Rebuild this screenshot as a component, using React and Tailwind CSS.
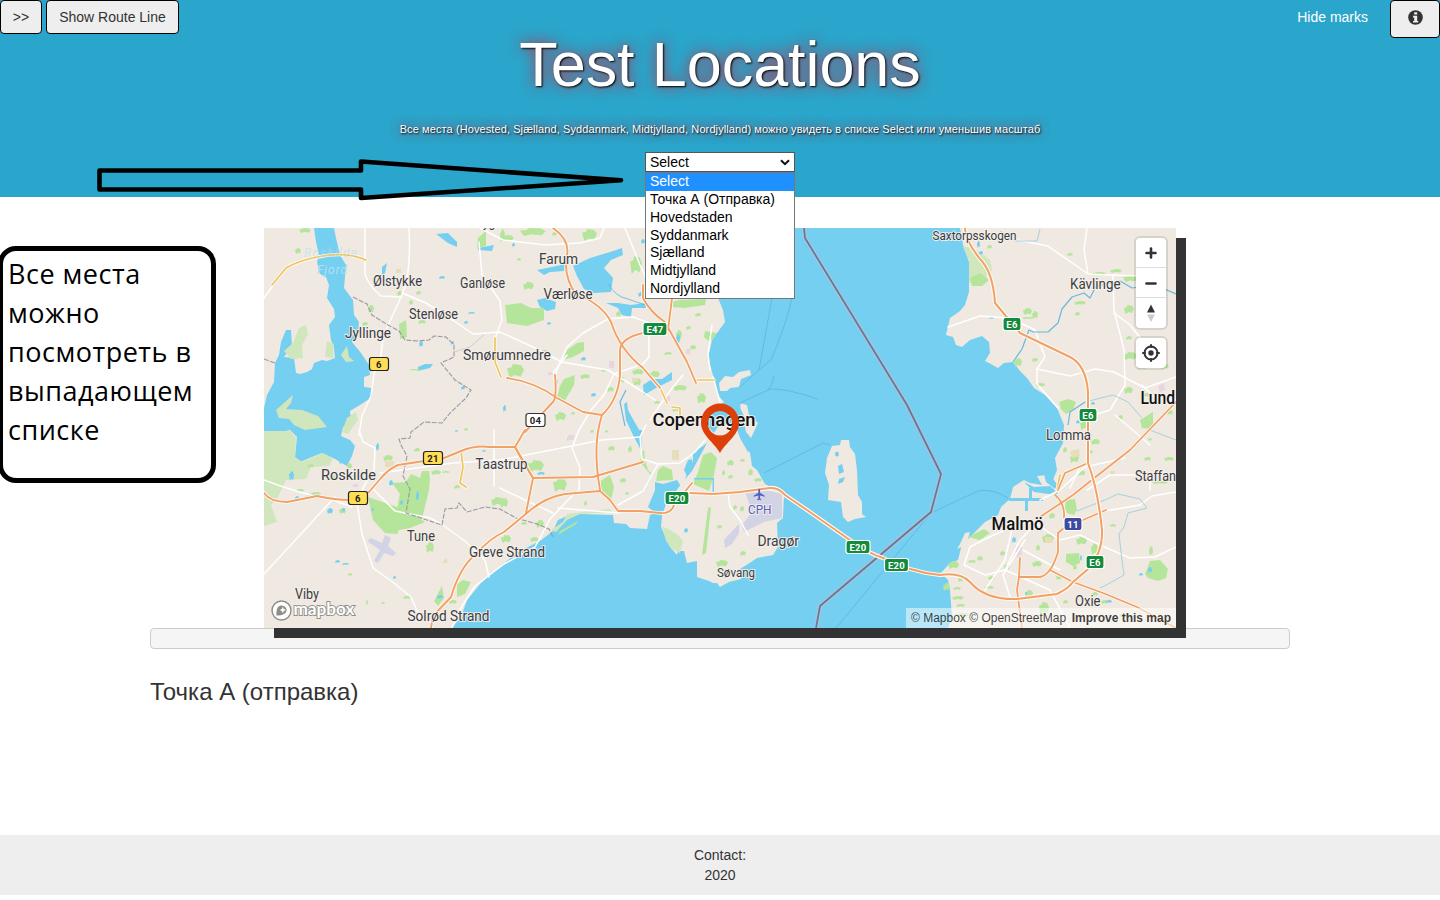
import { MdFlight } from "react-icons/md";

const WATER = "#75cff0";
const LAND = "#efe9e1";
const GREEN = "#b4e59b";

const OPTIONS = ["Select", "Точка А (Отправка)", "Hovedstaden", "Syddanmark", "Sjælland", "Midtjylland", "Nordjylland"];

/* Map geometry uses one shared coordinate space, see the svg viewBox. */
const WATER_PATHS = [
  // Roskilde Fjord
  "M314 228 L316 242 L319 255 L317 262 L320 274 L326 277 L329 285 L327 298 L334 309 L335 317 L329 325 L331 340 L334 348 L335 358 L327 361 L322 360 L314 363 L312 369 L307 372 L300 374 L296 373 L294 358 L284 357 L292 346 L291 330 L286 330 L281 342 L279 355 L275 363 L274 382 L267 395 L264 408 L264 436 L290 430 L297 437 L295 457 L300 462 L312 457 L322 453 L335 459 L347 466 L352 456 L355 446 L350 440 L341 436 L343 427 L351 420 L350 411 L360 405 L372 397 L372 388 L364 387 L364 377 L370 375 L369 365 L361 353 L352 342 L358 333 L359 322 L354 315 L353 300 L344 288 L346 265 L340 255 L336 238 L334 228 Z",
  // Øresund
  "M452 628 L461 617 L467 600 L481 583 L504 563 L520 551 L540 541 L553 531 L558 520 L567 516 L580 514 L613 515 L614 523 L626 524 L630 528 L647 529 L650 515 L655 513 L648 507 L655 490 L655 482 L663 484 L677 480 L682 488 L687 474 L687 464 L693 462 L693 453 L707 443 L714 433 L706 425 L712 410 L724 402 L718 395 L713 375 L708 358 L712 340 L725 322 L723 310 L718 298 L718 228 L960 228 L963 245 L969 262 L969 292 L965 305 L960 311 L950 318 L946 335 L953 337 L956 345 L962 347 L970 340 L982 336 L989 342 L990 353 L985 361 L989 363 L998 368 L1004 363 L1013 362 L1020 371 L1027 378 L1034 388 L1045 395 L1057 408 L1064 425 L1063 443 L1055 458 L1057 470 L1052 482 L1047 475 L1037 476 L1042 485 L1030 483 L1024 480 L1013 487 L1010 499 L1001 507 L998 515 L985 522 L970 537 L962 544 L958 560 L950 563 L941 573 L948 580 L950 590 L952 617 L948 628 Z",
  // lakes around Farum and Copenhagen
  "M573 266 L590 258 L610 252 L622 248 L623 255 L611 260 L604 268 L613 278 L611 292 L594 293 L584 289 L577 276 Z",
  "M537 270 L552 267 L566 264 L564 271 L550 272 L544 275 Z",
  "M537 300 L545 298 L556 302 L555 309 L547 311 L540 307 Z",
  "M606 303 L618 303 L631 305 L645 303 L646 308 L632 308 L631 317 L622 315 L618 308 Z",
  "M643 385 L652 379 L662 379 L672 372 L672 380 L656 388 L644 395 Z",
  "M436 234 L448 233 L457 242 L457 247 L448 243 Z",
  "M418 367 L425 364 L433 364 L430 368 L418 371 Z",
  "M478 248 L494 245 L492 251 L478 250 Z",
  "M382 267 L387 263 L385 273 L382 276 Z",
  "M624 404 L627 402 L628 410 L634 421 L641 433 L642 452 L633 435 L626 420 Z",
  "M632 430 L642 430 L642 435 L634 436 Z",
];

const ISLANDS = [
  "M832 446 L840 445 L841 440 L849 440 L850 447 L855 454 L857 470 L858 495 L862 502 L862 514 L866 517 L855 519 L848 522 L843 517 L841 502 L828 500 L829 485 L825 473 L827 458 Z",
  "M719 383 L725 376 L733 377 L739 372 L750 370 L751 375 L741 379 L739 387 L730 388 L727 391 L720 391 Z",
  // Amager
  "M720 424 L708 441 L700 456 L692 471 L681 484 L674 494 L667 501 L662 516 L661 527 L670 547 L677 555 L678 551 L684 551 L687 563 L697 561 L697 577 L709 581 L713 583 L717 583 L720 587 L729 582 L741 579 L740 569 L748 564 L757 558 L773 555 L778 547 L777 523 L783 518 L784 495 L780 492 L765 484 L757 470 L752 466 L750 453 L743 440 L736 425 Z",
  "M739 403 L747 405 L749 415 L758 423 L751 438 L746 432 L742 414 Z",
  "M960 544 L965 533 L970 532 L966 545 L957 549 Z",
];

const PALE_PARKS = [
  "M299 328 L306 325 L308 334 L302 345 L303 358 L291 359 L284 351 L293 343 Z",
  "M327 341 L334 344 L333 358 L325 357 Z",
  "M341 355 L347 346 L349 357 L354 361 L346 362 Z",
  "M276 410 L293 395 L291 403 L286 409 L302 410 L318 416 L327 427 L305 430 L294 425 L289 419 L279 418 Z",
  "M347 418 L356 412 L358 420 L348 434 L342 432 Z",
  "M264 431 L290 431 L296 438 L295 457 L302 462 L314 457 L322 453 L333 458 L329 466 L311 467 L306 479 L286 480 L278 497 L271 505 L277 522 L264 526 Z",
  "M662 526 L677 534 L683 541 L680 553 L672 549 L666 541 Z",
  "M963 247 L972 247 L990 260 L992 270 L982 282 L969 283 L969 260 Z",
  "M551 530 L563 522 L567 514 L610 509 L612 512 L580 514 L567 520 L556 532 Z",
];

const PARKS = [
  "M368 497 L394 506 L413 513 L425 522 L410 528 L399 530 L397 534 L385 533 L373 520 Z",
  "M392 483 L406 482 L411 474 L420 478 L422 471 L429 471 L430 479 L429 490 L422 519 L408 513 L397 509 L400 494 Z",
  "M505 305 L521 303 L531 308 L544 308 L544 320 L527 326 L507 323 Z",
  "M564 379 L575 375 L574 385 L564 402 L557 397 L560 386 Z",
  "M703 455 L711 452 L717 458 L714 475 L709 491 L693 484 L698 472 Z",
  "M658 470 L663 466 L672 470 L673 480 L656 481 Z",
  "M599 482 L610 475 L614 487 L611 500 L602 493 Z",
  "M671 302 L680 300 L706 299 L705 305 L685 308 L672 307 Z",
  "M705 331 L717 333 L710 342 L704 337 Z",
  "M642 451 L640 462 L650 474 L653 475 L648 470 L645 460 L644 450 Z",
  "M567 350 L577 343 L584 342 L584 351 L573 357 L563 360 Z",
  "M478 238 L486 231 L486 246 L477 248 Z",
  "M399 324 L406 320 L407 337 L400 339 Z",
  "M457 584 L463 580 L471 582 L465 594 L457 597 Z",
  "M434 601 L442 586 L444 598 L438 606 Z",
  "M1145 574 L1150 561 L1160 560 L1168 569 L1166 578 L1158 581 L1148 578 Z",
  "M970 278 L980 273 L989 280 L982 286 L972 286 Z",
  "M1065 508 L1066 500 L1075 499 L1077 510 L1074 515 L1067 513 Z",
  "M1059 402 L1068 399 L1076 402 L1073 410 L1066 414 L1061 409 Z",
  "M968 537 L984 529 L990 533 L980 540 Z",
  "M1066 554 L1079 553 L1080 563 L1073 566 L1066 562 Z",
  "M1140 420 L1153 412 L1153 429 L1142 428 Z",
  "M702 555 L708 508 L711 507 L706 553 Z",
  "M560 531 L578 521 L576 524 L558 535 Z",
];

/* small wooded spots: x, y, width, height */
const SPOTS = [
  [299, 228, 12, 5], [295, 248, 6, 6], [368, 305, 6, 8], [362, 322, 6, 4], [397, 291, 6, 5], [416, 291, 5, 4], [409, 300, 4, 5], [418, 320, 8, 4], [409, 369, 12, 1.6], [464, 428, 4, 3],
  [502, 235, 12, 6], [520, 228, 26, 8], [582, 229, 15, 12], [630, 256, 12, 18], [552, 232, 5, 4], [523, 282, 11, 8], [517, 258, 4, 3], [500, 229, 5, 14], [652, 286, 6, 10], [616, 311, 5, 6], [507, 364, 17, 14], [540, 350, 8, 4], [555, 412, 11, 9], [571, 412, 4, 3], [580, 374, 10, 5], [601, 369, 5, 3], [632, 369, 12, 6], [618, 377, 7, 6], [649, 371, 11, 7], [633, 378, 8, 8], [673, 385, 14, 6], [697, 393, 9, 11], [676, 330, 6, 10], [686, 326, 5, 4], [664, 352, 8, 3], [690, 345, 6, 5], [672, 406, 8, 6], [654, 401, 6, 3], [695, 313, 6, 4], [607, 387, 7, 5], [590, 430, 4, 3],
  [528, 460, 16, 12], [553, 478, 14, 14], [567, 437, 3, 4], [608, 446, 7, 5], [620, 478, 6, 5], [605, 430, 3, 3], [625, 492, 4, 3], [573, 491, 4, 4], [584, 501, 3, 5], [628, 446, 4, 7], [500, 498, 8, 10], [491, 497, 13, 9], [501, 535, 10, 8], [536, 520, 8, 8], [530, 537, 9, 5], [521, 522, 6, 3],
  [426, 542, 8, 11], [348, 573, 4, 3], [403, 596, 8, 3], [381, 602, 4, 2], [366, 600, 2, 5], [449, 600, 8, 4], [431, 470, 10, 5], [442, 471, 8, 2], [307, 464, 7, 4], [347, 463, 5, 6], [328, 475, 8, 4], [454, 485, 6, 4], [414, 448, 6, 4], [339, 508, 7, 6], [296, 489, 8, 3], [310, 492, 11, 4], [383, 455, 10, 6],
  [716, 560, 12, 7], [717, 525, 5, 4], [733, 505, 4, 5], [740, 506, 4, 6], [748, 469, 5, 7], [740, 459, 5, 3], [727, 460, 7, 6], [728, 475, 5, 4], [722, 470, 3, 6], [754, 478, 8, 4], [740, 551, 6, 5],
  [987, 245, 5, 4], [1067, 253, 6, 3], [1092, 272, 14, 3], [1110, 269, 12, 4], [1123, 275, 15, 7], [1124, 305, 10, 9], [1074, 301, 12, 4], [1075, 312, 5, 4], [1023, 308, 9, 7], [1022, 317, 12, 2], [1032, 311, 6, 8], [1123, 352, 14, 8], [1124, 387, 9, 7], [1161, 364, 8, 5], [1137, 366, 10, 3], [1143, 393, 7, 4], [1126, 336, 6, 4], [1032, 358, 6, 4], [1014, 358, 8, 9], [1036, 383, 9, 4], [1080, 420, 9, 10], [1118, 415, 5, 5], [1167, 410, 6, 5], [1148, 438, 4, 3],
  [1091, 439, 9, 6], [1070, 454, 9, 9], [1078, 470, 7, 6], [1063, 447, 4, 6], [1086, 450, 7, 4], [1164, 457, 10, 4], [1152, 481, 16, 3], [1144, 457, 7, 4], [1049, 513, 6, 6], [1000, 551, 5, 5], [977, 556, 6, 5], [988, 576, 7, 4], [1004, 564, 6, 6], [1018, 546, 4, 6], [1042, 534, 12, 9], [1076, 537, 11, 8], [1091, 543, 7, 12], [1032, 561, 10, 6], [1056, 575, 6, 5], [1073, 565, 4, 5], [948, 561, 11, 8], [943, 583, 7, 8], [953, 587, 8, 3], [958, 577, 5, 5], [952, 596, 12, 4], [956, 604, 9, 3], [955, 613, 14, 4], [1025, 590, 8, 7], [1039, 602, 10, 12], [1092, 592, 6, 4], [1101, 600, 7, 4], [1119, 614, 10, 3], [1149, 546, 4, 10], [968, 560, 8, 3], [984, 586, 10, 3], [1036, 545, 4, 6], [1063, 600, 5, 4], [1110, 524, 6, 3],
];

const PONDS = [
  [289, 471, 5, 10], [376, 443, 3, 8], [389, 480, 4, 6], [416, 491, 3, 10], [400, 500, 3, 5], [327, 508, 6, 6], [339, 459, 6, 5], [393, 576, 3, 3], [419, 341, 4, 6], [451, 341, 3, 4], [461, 386, 4, 4], [468, 312, 7, 2], [464, 321, 4, 3], [439, 276, 6, 3], [512, 243, 3, 4], [547, 322, 4, 3], [581, 357, 5, 4], [591, 393, 5, 4], [503, 405, 3, 7], [676, 334, 4, 10], [641, 239, 4, 5], [665, 231, 5, 3], [638, 292, 6, 5], [684, 528, 4, 5], [537, 472, 8, 3], [335, 560, 5, 3], [342, 563, 7, 2], [295, 496, 4, 4], [305, 495, 14, 3], [342, 508, 3, 4], [437, 595, 6, 4], [455, 430, 3, 2], [482, 450, 4, 2], [977, 241, 3, 7], [979, 251, 4, 4], [989, 317, 5, 2], [1080, 555, 2, 6], [1139, 573, 4, 3], [1148, 567, 4, 6], [1106, 600, 6, 3], [1076, 420, 4, 4], [1091, 402, 4, 3], [1025, 592, 2, 3], [1012, 537, 4, 6], [556, 380, 2, 4], [371, 508, 3, 3],
];

const HARBOUR = [
  "M1009 498 h20 v-10 h3 v10 h11 v3 h-15 v10 h-3 v-10 h-16 Z",
  "M1024 482 l10 5 l16 -1 l8 7 l-2 2 l-22 -3 Z",
  "M1044 474 l8 3 l6 9 l-3 3 l-9 -7 Z",
  "M694 478 h20 v14 h-1.500 v-12.500 h-18.500 Z",
  "M684 470 l4 -10 l4 -1 l1 7 l-6 10 Z",
  "M738 386 L742 395 L740 408 L744 416 L741 428 L747 437 L752 448 L748 452 L740 438 L735 424 L733 403 Z",
];

const WHITE_ROADS = [
  "M264 298 L274 284", "M365 228 V275 Q371 288 381 296 L402 297", "M409 228 Q411 265 405 287 L398 304 L389 323 L383 338 L381 355 L374 374 L371 396 L362 416 L359 435",
  "M402 293 L426 303 L454 321 L473 334 L500 332 L533 347 L562 362 L608 370 L640 390 L655 400", "M479 242 L482 275 L500 301 L502 320 L495 338", "M264 574 L335 497", "M264 480 Q300 494 333 500 L352 507",
  "M359 430 L363 442 L375 448 L374 470 L364 486 L357 503 L362 534 L373 568 L394 583 L411 597 L420 617", "M372 488 L395 511 L430 518 L443 525 L466 542 L485 560 L489 577", "M380 473 L453 463 L500 460 L602 440 L640 437",
  "M452 628 L459 611 L475 586 L504 564 L535 547 L550 519 L568 500 L579 490 L580 468 L572 448 L579 430 L591 410 L604 395 L614 374 L643 364 L649 357 V323 L633 317 L608 319 L583 333 L567 347 L560 362 L554 379",
  "M480 228 L503 240 L545 245 L580 243 L600 238 L604 228", "M625 228 L640 265 L652 291", "M553 373 L567 355", "M558 508 L620 513", "M618 505 L643 491 L658 464 L642 459 L640 437 L646 425", "M658 464 L680 463 L695 452 L705 440",
  "M712 325 L708 354 L710 370 M683 375 L673 387 L660 405 L650 420 M713 377 L720 402", "M500 488 L525 500 L553 513", "M494 430 V486", "M728 494 L730 507 L740 520 L748 535",
  "M1018 240 L1048 246 L1088 274 L1110 275 L1140 276 M1087 228 L1084 250 L1088 274", "M948 327 L980 316 L1010 318 L1035 330 L1045 357 L1037 369 L1037 384 L1058 408", "M1113 275 L1114 310 L1124 350 L1125 385 L1110 410 L1085 418", "M1037 369 L1070 376 L1095 369 L1114 372 L1145 388 L1176 377", "M1114 313 L1130 325 L1142 340 M1142 385 L1155 398 L1176 400", "M1105 511 L1140 505 L1152 496 L1176 492", "M1115 415 L1135 432 L1150 445", "M964 565 L970 547 L983 540 L1005 530 M964 565 L985 575 L1005 570 L1023 578 L1050 590 L1070 628", "M985 590 L1005 560 L1014 520 M1005 570 L1020 540 L1040 520 M1023 550 L1060 570 M1031 520 L1060 540 L1080 535 L1100 545 L1130 558 L1155 557 L1176 547", "M1010 597 L1003 575 L1025 540 M1040 500 L1060 490 L1085 467 L1125 458 M1080 467 L1070 488 M1087 490 L1110 475 H1150 V490",
];

const YELLOW_ROADS = ["M272 285 L286 268 Q300 260 318 257 Q345 251 366 260", "M495 338 V362 L501 377", "M461 451 L463 467 L460 483 L466 487", "M696 380 H714", "M661 390 L667 403", "M672 407 L680 408 V418", "M1057 490 L1060 475"];

const ORANGE_ROADS = [
  "M264 493 Q270 502 287 502 L317 496 Q335 500 350 500 L369 492 L381 478 Q390 468 398 465 L444 458 L461 451 Q475 445 490 447 L515 447",
  "M525 430 L515 447 L533 478 L526 513", "M525 432 L553 402 Q557 397 555 375", "M515 447 L525 465 L533 478 L593 477 L643 462",
  "M431 628 L433 616 L451 597 Q460 567 475 555 Q490 538 504 532 L527 513 Q545 497 565 494 L600 491 L610 500 L618 511 H640 L660 513 Q671 514 674 505 L692 483",
  "M553 228 Q570 240 567 255 Q563 275 575 293 Q603 305 611 322 Q620 350 643 368 L660 388",
  "M643 333 Q621 338 620 350 V375 Q618 400 602 415 Q592 445 600 490",
  "M643 285 V298 Q650 312 665 322 L687 362 L696 383", "M672 298 L668 330", "M507 378 Q535 382 557 398 L583 412 L602 415",
];
const MAIN_ROADS = [
  "M690 493 L713 494 L740 492 L770 488 Q778 487 785 495 L807 510 L847 538 Q865 552 883 558 Q910 572 940 575 Q960 572 970 582 Q985 600 1017 599 L1057 594 Q1069 588 1073 582 L1087 570 Q1103 553 1102 530 Q1098 490 1088 463 V392 Q1086 365 1070 357 L1020 333 L995 303 Q993 272 980 259 Q965 240 965 228",
];
const MALMO_ROADS = ["M1020 558 L1019 577 L1017 590 L1022 628", "M1019 577 H1040 Q1051 575 1058 552 V533 L1065 527", "M1050 570 L1073 582 L1103 593 L1137 607 L1176 628", "M1040 517 L1073 495 L1093 479 L1130 450 L1176 402", "M1083 520 L1106 510", "M1055 495 Q1065 503 1064 518", "M1088 463 L1065 473 L1058 490"];

/* text, left, baseline, width, size */
const LABELS = [
  ["Ølstykke", 373, 286, 49, 14.2], ["Ganløse", 460, 288, 45, 14], ["Stenløse", 409, 318.500, 49, 14.2], ["Jyllinge", 345, 337.500, 46, 14.2], ["Smørumnedre", 463, 359.500, 88, 14.2], ["Farum", 539, 264, 39, 14.2], ["Værløse", 543.5, 299, 49, 14.2],
  ["Taastrup", 475.5, 469, 52, 14.2], ["Roskilde", 321, 480, 55, 15.2], ["Tune", 407, 541, 28, 14.2], ["Greve Strand", 469, 557, 76, 14.2], ["Viby", 295, 599, 24, 14.2], ["Solrød Strand", 407.5, 620.500, 82, 14.2], ["Søvang", 717, 576.500, 38, 13], ["Dragør", 757.5, 545.500, 41.500, 14.2],
  ["Saxtorpsskogen", 932.5, 239.500, 84, 13], ["Kävlinge", 1070, 288.500, 50.500, 14.2], ["Lomma", 1046, 440, 45, 14], ["Staffan", 1135, 481, 41, 14.2], ["Oxie", 1075, 605.500, 25.500, 14],
];
const CITY_LABELS = [["Copenhagen", 652.5, 425.500, 103, 19], ["Malmö", 991.500, 530, 52, 18.500], ["Lund", 1140.500, 404, 34.500, 17.500]];

/* text, centre x, centre y, width, fill, stroke, text colour */
const SHIELDS = [
  ["6", 379, 364, 19, "#ffdd55", "#222", "#222"], ["21", 433, 458, 19, "#ffdd55", "#222", "#222"], ["6", 358, 498, 19, "#ffdd55", "#222", "#222"], ["04", 535.5, 420, 19, "#fff", "#333", "#222"],
  ["E47", 655, 329, 24, "#148a3c", "#fff", "#fff"], ["E20", 677, 498, 24, "#148a3c", "#fff", "#fff"], ["E20", 858, 547, 24, "#148a3c", "#fff", "#fff"], ["E20", 896.5, 565, 24, "#148a3c", "#fff", "#fff"],
  ["E6", 1012, 324, 18, "#148a3c", "#fff", "#fff"], ["E6", 1088, 415, 18, "#148a3c", "#fff", "#fff"], ["E6", 1095, 562, 18, "#148a3c", "#fff", "#fff"], ["11", 1073, 524, 18, "#3d4aa0", "#fff", "#fff"],
];

/* An eight-sided irregular patch that fills the given box. */
function spotPath([x, y, w, h]) {
  const p = [[0, 0.3], [0.25, 0.25], [0.35, 0], [0.8, 0.08], [1, 0.4], [0.82, 0.9], [0.45, 0.78], [0.15, 1]];
  return "M" + p.map(([a, b]) => `${(x + a * w).toFixed(1)} ${(y + b * h).toFixed(1)}`).join("L") + "Z";
}

function Roads({ paths, color, width, casing }) {
  return (
    <g fill="none" strokeLinejoin="round" strokeLinecap="round">
      {casing && paths.map((d) => <path key={"c" + d} d={d} stroke="#fffaf0" strokeWidth={casing} />)}
      {paths.map((d) => <path key={d} d={d} stroke={color} strokeWidth={width} />)}
    </g>
  );
}

function MapDrawing() {
  return (
    <svg viewBox="264 228 912 400" className="block h-[400px] w-[912px]">
      <rect x="264" y="228" width="912" height="400" fill={LAND} />
      {WATER_PATHS.map((d) => <path key={d} d={d} fill={WATER} />)}
      {ISLANDS.map((d) => <path key={d} d={d} fill={LAND} />)}
      {PALE_PARKS.map((d) => <path key={d} d={d} fill="#d0e6bd" />)}
      {PARKS.map((d) => <path key={d} d={d} fill={GREEN} />)}
      {SPOTS.map((s) => <path key={s.join()} d={spotPath(s)} fill={GREEN} />)}
      {PONDS.map((s) => <path key={s.join()} d={spotPath(s)} fill={WATER} />)}
      {HARBOUR.map((d) => <path key={d} d={d} fill={WATER} />)}
      <g fill={WATER}>
        <ellipse cx="837" cy="454" rx="2" ry="2.500" />
        <path d="M838 466 l4 -2 l2 8 l-5 2 Z M839 479 l6 -2 l-2 5 l-5 2 Z" />
      </g>
      <g fill="#d3d3e6">
        <path d="M367 541 L371 538 L382 543 L385 535 L391 538 L388 546 L396 553 L393 556 L384 553 L378 563 L374 561 L380 550 Z" />
        <path d="M745 492 L762 489 L782 494 V518 L764 522 L744 532 L742 525 L752 512 Z" />
        <path d="M724 540 L734 529 L739 524 V533 L732 544 L725 548 Z" />
      </g>
      <g fill="#e8d5df">
        <path d="M609 361 h5 v7 h-5z M686 349 h4 v5 h-4z M548 372 h6 v3 h-6z M568 435 h6 v5 h-6z M1015 548 l5 -3 l2 9 l-5 4z M1158 386 l6 -3 l1 7 l-5 2z M353 484 h5 v3 h-5z M665 396 h5 v5 h-5z" />
      </g>
      <g fill="#e6ddbd">
        <path d="M1070 451 l9 -2 l1 7 l-8 2z M1110 471 h5 v4 h-5z M396 269 h5 v4 h-5z M385 461 h9 v6 h-9z M632 378 h6 v4 h-6z M1045 537 h7 v6 h-7z M672 450 h7 v10 h-7z M442 563 l4 -5 l2 5z" />
      </g>
      <Roads paths={WHITE_ROADS} color="#fff" width={1.5} />
      <g fill="none" stroke="#68b7de" strokeWidth="1.200" strokeLinejoin="round">
        <path d="M1013 362 L1022 349 L1029 330 L1033 332 L1048 332 L1058 323 L1062 309 L1072 297 L1084 293 L1090 298 L1096 286 L1120 281 L1132 288 L1155 285 L1176 294" />
        <path d="M1068 425 L1070 412 L1085 402" />
        <path d="M625 426 L620 402 L626 390" />
      </g>
      <g fill="none" stroke="#9fcde0" strokeWidth="0.900">
        <path d="M1085 402 L1113 395 L1128 402 L1142 418" />
        <path d="M1077 511 L1105 500 L1118 494 L1140 499 L1147 508 L1128 513 L1124 527 L1119 534 L1122 560 L1124 575 L1110 583 L1100 588" />
        <path d="M1000 231 L1015 241 L1037 241 L1040 229 M1150 430 L1176 440" />
      </g>
      <g fill="none" stroke="#5db4e0" strokeWidth="0.800">
        <path d="M772 298 L759 370 L740 387 M792 298 Q786 325 771 360 L759 370 M740 403 L770 389 Q785 388 818 399 M774 376 Q773 385 768 390" />
        <path d="M764 473 L823 443 L830 445 M836 628 L931 513 Q965 497 978 491 Q992 488 1008 498" />
        <path d="M608 284 Q616 297 628 299 L645 305" />
      </g>
      <g fill="none" stroke="#9a98a5" strokeWidth="1.100" strokeDasharray="5 1.500">
        <path d="M353 297 L367 304 L372 315 L388 325 L399 331 L405 340 L418 341 L429 340 L434 336 L446 337 L454 345 L454 357 L441 363 L455 380 L471 390 L466 398 L450 413 L442 423 L424 422 L411 432 L410 438 L399 439 L401 445 L407 456 L403 476 L410 489 L406 513 L442 525 L445 509 L457 508 L459 503 L467 512 L485 507 L500 509 L516 518 L537 524 L549 529 L553 537" />
        <path d="M264 359 L275 363" />
      </g>
      <path d="M454 352 L470 347 L484 335" fill="none" stroke="#cdccd2" strokeWidth="1" />
      <g fill="none" strokeLinejoin="round">
        <path d="M804 228 L805 238 L907 405 L941 474 L931 512 L820 606 L816 628" stroke="#a5c3dd" strokeWidth="5" opacity="0.700" />
        <path d="M804 228 L805 238 L907 405 L941 474 L931 512 L820 606 L816 628" stroke="#6f7491" strokeWidth="1.700" />
      </g>
      <Roads paths={YELLOW_ROADS} color="#efc462" width={1.7} casing={3.4} />
      <Roads paths={ORANGE_ROADS} color="#f1a068" width={1.9} casing={3.6} />
      <Roads paths={MALMO_ROADS} color="#f1a068" width={1.8} casing={3.2} />
      <Roads paths={MAIN_ROADS} color="#f1a068" width={2} casing={4.2} />

      {SHIELDS.map(([t, cx, cy, w, fill, stroke, ink]) => (
        <g key={t + cx}>
          <rect x={cx - w / 2} y={cy - 6.5} width={w} height="13" rx="2.500" fill={fill} stroke={stroke} strokeWidth="1.200" />
          <text x={cx} y={cy + 3.5} textAnchor="middle" fontSize="9.500" fontWeight="700" fill={ink} fontFamily="Roboto, sans-serif" letterSpacing="0.300">{t}</text>
        </g>
      ))}

      <g fontFamily="Roboto, sans-serif" stroke="#f5f0ea" strokeOpacity="0.900" strokeWidth="2.200" strokeLinejoin="round" paintOrder="stroke" fill="#3b3d45">
        {LABELS.map(([t, x, y, w, s]) => (
          <text key={t} x={x} y={y} fontSize={s} textLength={w} lengthAdjust="spacingAndGlyphs">{t}</text>
        ))}
        <g fill="#111" fontWeight="500">
          {CITY_LABELS.map(([t, x, y, w, s]) => (
            <text key={t} x={x} y={y} fontSize={s} textLength={w} lengthAdjust="spacingAndGlyphs">{t}</text>
          ))}
        </g>
        <text x="748" y="514" fontSize="12" textLength="23.500" lengthAdjust="spacingAndGlyphs" fill="#5560bd">CPH</text>
        <text x="483" y="227" fontSize="12">yg</text>
      </g>
      <g fontFamily="Roboto, sans-serif" fontStyle="italic" fontSize="12" fill="#b3dff2" letterSpacing="2">
        <text x="304" y="257" textLength="55" fillOpacity="0.600">Roskilde</text>
        <text x="317" y="274" textLength="32">Fjord</text>
      </g>
      <MdFlight x="752.500" y="487.500" width="14" height="14" color="#5560bd" />

      <path fillRule="evenodd" fill="#dd3f08" d="M720 453 C713 441 701 435 701 422.500 A19 19 0 0 1 739 422.500 C739 435 727 441 720 453 Z M720 411 a12.300 12.300 0 1 0 0.010 0 Z" />

      <g>
        <circle cx="281.500" cy="610.500" r="9.500" fill="#fff" stroke="#8f8d8a" strokeWidth="1.400" />
        <path d="M276.500 615.500 C275.500 605 281 604.500 284 606 C290 610 285 616.500 276.500 615.500 Z" fill="#8f8d8a" />
        <path d="M282.800 606.800 l1 2.200 l2.200 1 l-2.200 1 l-1 2.200 l-1 -2.200 l-2.200 -1 l2.200 -1 Z" fill="#fff" />
        <text x="293.500" y="615" fontFamily="Lato, sans-serif" fontSize="16.500" fontWeight="700" fill="#fff" stroke="#918f8c" strokeWidth="1.800" paintOrder="stroke" textLength="61" lengthAdjust="spacingAndGlyphs">mapbox</text>
      </g>
    </svg>
  );
}

function MapControls() {
  return (
    <div className="absolute right-[10px] top-[10px] flex w-[30px] flex-col gap-[10px] text-[#333]">
      <div className="flex flex-col divide-y divide-[#ddd] rounded bg-white shadow-[0_0_0_2px_rgba(0,0,0,0.1)]">
        <button aria-label="Zoom in" className="flex h-[30px] items-center justify-center">
          <svg viewBox="0 0 30 30" className="size-[30px]" stroke="#333" strokeWidth="2.600" strokeLinecap="round"><path d="M10.500 15h9M15 10.500v9" /></svg>
        </button>
        <button aria-label="Zoom out" className="flex h-[30px] items-center justify-center">
          <svg viewBox="0 0 30 30" className="size-[30px]" stroke="#333" strokeWidth="2.600" strokeLinecap="round"><path d="M10.500 15.500h9" /></svg>
        </button>
        <button aria-label="Reset bearing" className="flex h-[30px] items-center justify-center">
          <svg viewBox="0 0 30 30" className="size-[30px]"><path d="M11 14.500l4-8 4 8z" fill="#333" /><path d="M11 16.500l4 7.500 4-7.500z" fill="#ccc" /></svg>
        </button>
      </div>
      <button aria-label="Find my location" className="flex h-[30px] items-center justify-center rounded bg-white shadow-[0_0_0_2px_rgba(0,0,0,0.1)]">
        <svg viewBox="0 0 30 30" className="size-[30px]" fill="none" stroke="#333" strokeWidth="2"><circle cx="15" cy="15" r="6.500" /><circle cx="15" cy="15" r="2.700" fill="#333" stroke="none" /><path strokeLinecap="round" d="M15 7v2M15 21v2M7 15h2M21 15h2" /></svg>
      </button>
    </div>
  );
}

function LocationSelect() {
  return (
    <div className="relative mt-[13px] w-[150px] text-[14px] leading-[18px] text-black">
      <div className="flex h-5 items-center justify-between border border-[#555] bg-white pl-1 pr-1">
        <span>Select</span>
        <svg viewBox="0 0 10 7" className="h-[7px] w-[10px]" fill="none" stroke="#111" strokeWidth="2"><path d="M1 1.200l4 4 4-4" /></svg>
      </div>
      <ul className="absolute left-0 top-5 z-20 w-full border border-[#767676] bg-white">
        {OPTIONS.map((o, i) => (
          <li key={o} className={i === 0 ? "h-[18px] bg-[#1e90ff] pl-1 leading-[17px] text-white" : "h-[17.800px] whitespace-nowrap pl-1 leading-[16px]"}>{o}</li>
        ))}
      </ul>
    </div>
  );
}

function InfoIcon() {
  return (
    <svg viewBox="0 0 15 15" className="mb-[3px] size-[15px]">
      <circle cx="7.500" cy="7.500" r="7.300" fill="#333" />
      <path fill="#eee" d="M6.200 2.200h3v2.300h-3zM5 5.700h4.200v5.200h1.100v1.700H5v-1.700h1.200V7.400H5z" />
    </svg>
  );
}

export default function App() {
  return (
    <div className="relative flex h-[900px] w-[1440px] flex-col overflow-hidden bg-white font-['Liberation_Sans',Arial,sans-serif] text-[14px] leading-5 text-[#333]">
      <header className="grid h-[197px] shrink-0 grid-cols-[1fr_auto_1fr] items-start bg-[#2aa5cb]">
        <div className="flex gap-1">
          <button className="h-[34px] w-[42px] rounded border border-black bg-[#eee]">&gt;&gt;</button>
          <button className="h-[34px] w-[133px] rounded border border-black bg-[#eee]">Show Route Line</button>
        </div>
        <div className="flex flex-col items-center text-white">
          <h1 className="mt-[29px] whitespace-nowrap text-[63px] leading-[70px] tracking-[-0.1px] [text-shadow:1px_1px_2px_black,0_0_14px_rgba(220,20,40,0.85)]">Test Locations</h1>
          <p className="mt-5 whitespace-nowrap text-[11px] leading-5 tracking-[0.095px] [text-shadow:1px_1px_2px_black,0_0_11px_rgba(220,20,40,0.85)]">
            Все места (Hovested, Sjælland, Syddanmark, Midtjylland, Nordjylland) можно увидеть в списке Select или уменьшив масштаб
          </p>
          <LocationSelect />
        </div>
        <div className="flex items-start justify-end gap-[22px]">
          <a className="mt-[7px] text-white">Hide marks</a>
          <button aria-label="Info" className="flex h-[38px] w-[50px] items-center justify-center rounded border border-black bg-[#eee]"><InfoIcon /></button>
        </div>
      </header>

      <main className="flex h-[638px] shrink-0 flex-col items-center pt-[31px]">
        <section className="relative z-10 h-[400px] w-[912px] shadow-[10px_10px_0_#333]">
          <MapDrawing />
          <MapControls />
          <div className="absolute bottom-0 right-0 flex h-[20px] w-[270px] items-center justify-between whitespace-nowrap bg-white/50 px-[5px] text-[12px] text-black/75">
            <span>© Mapbox © OpenStreetMap</span><b>Improve this map</b>
          </div>
        </section>
        <div className="h-[21px] w-[1140px] shrink-0 rounded border border-[#ccc] bg-[#f5f5f5]" />
        <h2 className="mt-[30px] w-[1140px] text-[24px] leading-[26px]">Точка А (отправка)</h2>
      </main>

      <footer className="flex h-[60px] shrink-0 flex-col items-center justify-center bg-[#eee]">
        <p>Contact:</p>
        <p>2020</p>
      </footer>

      <svg viewBox="0 0 540 46" className="absolute left-[90px] top-[157px] z-20 h-[46px] w-[540px]" fill="none" stroke="#000" strokeWidth="4.600" strokeLinecap="round" strokeLinejoin="round">
        <path d="M9.500 13.500H271V4.500L531 23.200L271 41V32.500H9.500Z" />
      </svg>
      <aside className="absolute left-[-2px] top-[246px] h-[237px] w-[218px] rounded-[18px] border-[5px] border-black bg-white pl-[5px] pt-[3px] font-['Open_Sans','Noto_Sans',sans-serif] text-[27px] leading-[39px] tracking-[0.5px] text-black">
        <p>Все места</p>
        <p>можно</p>
        <p>посмотреть в</p>
        <p>выпадающем</p>
        <p>списке</p>
      </aside>
    </div>
  );
}
